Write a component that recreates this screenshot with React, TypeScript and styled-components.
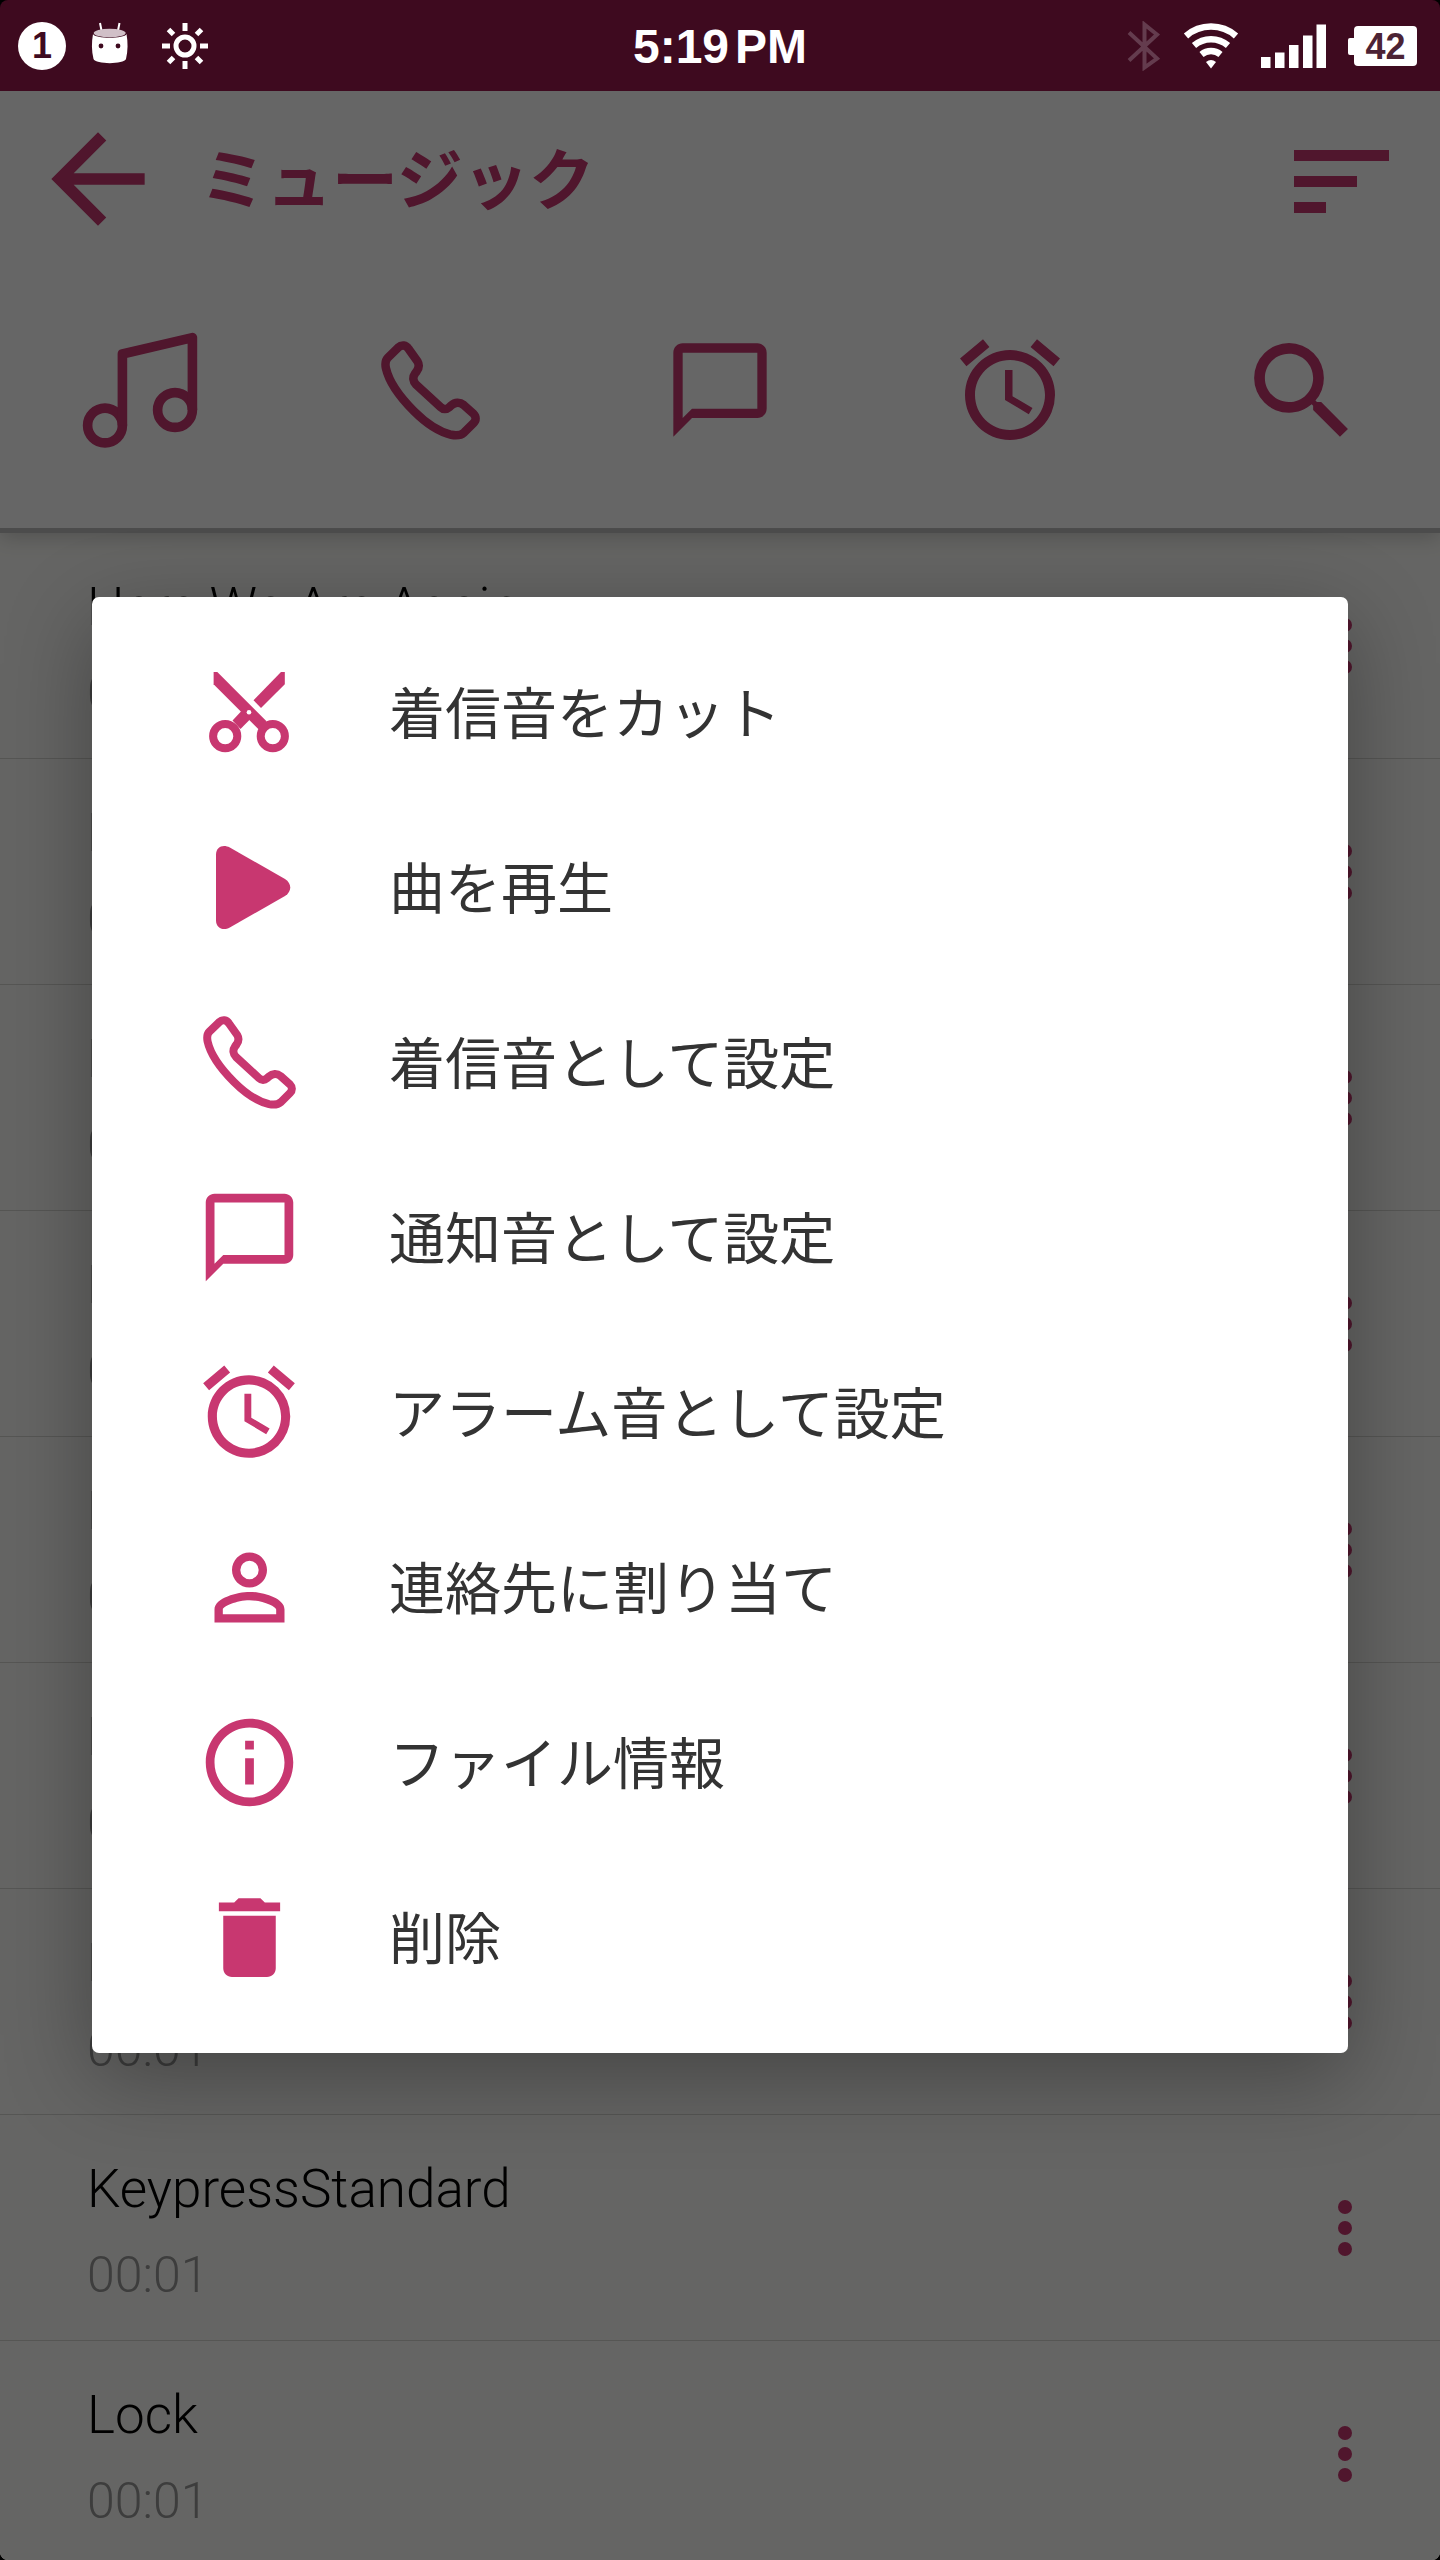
import React, { useState } from 'react'
import styled, { createGlobalStyle } from 'styled-components';


const pink = '#c83770';

const GlobalStyle = createGlobalStyle`
  * {
    box-sizing: border-box;
  }
  body {
    margin: 0;
    background-color: black;
    font-family: Roboto, "Noto Sans CJK JP", sans-serif;
  }
  button {
    border: 0;
    padding: 0;
    background: none;
    color: inherit;
    font: inherit;
    cursor: pointer;
  }
  svg {
    display: block;
    flex-shrink: 0;
  }
`;

const Phone = styled.div`
  display: flex;
  flex-direction: column;
  height: 100vh;
  border-radius: 8px;
  overflow: hidden;
`;

/* status bar */

const StatusBar = styled.div`
  display: grid;
  grid-template-columns: 1fr auto 1fr;
  align-items: center;
  flex-shrink: 0;
  height: 91px;
  padding: 0 18px;
  background-color: #3e0a1f;
  color: white;
  font-family: "Liberation Sans", sans-serif;
  font-weight: 700;
`;

const StatusGroup = styled.div<{ $end?: boolean }>`
  display: flex;
  align-items: center;
  justify-content: ${(p) => (p.$end ? 'flex-end' : 'flex-start')};
  gap: ${(p) => (p.$end ? '22px' : '24px')};
  padding-right: ${(p) => (p.$end ? '5px' : '0')};
`;

const Counter = styled.span`
  width: 48px;
  height: 48px;
  border-radius: 50%;
  background-color: white;
  color: #3e0a1f;
  font-size: 36px;
  line-height: 48px;
  text-align: center;
`;

const Clock = styled.div`
  display: flex;
  gap: 6px;
  padding-top: 2px;
  font-size: 48px;
  line-height: 56px;
`;

const Battery = styled.span`
  position: relative;
  width: 63px;
  height: 40px;
  margin-left: 6px;
  border-radius: 4px;
  background-color: white;
  color: #4c2335;
  font-size: 36px;
  line-height: 41px;
  text-align: center;
  &::before {
    content: "";
    position: absolute;
    top: 12px;
    left: -6px;
    width: 7px;
    height: 17px;
    border-radius: 2px 0 0 2px;
    background-color: white;
  }
`;

/* screen */

const Screen = styled.div`
  position: relative;
  flex: 1;
  min-height: 0;
  overflow: hidden;
  background-color: #fdfdf9;
`;

const Header = styled.header`
  position: relative;
  padding-bottom: 15px;
  border-bottom: 5px solid #bebebe;
  background-color: white;
  color: ${pink};
  box-shadow: 0 4px 20px rgba(0, 0, 0, 0.2);
`;

const TitleBar = styled.div`
  display: flex;
  align-items: center;
  height: 176px;
  padding: 0 50px 0 28px;
`;

const Title = styled.h1`
  flex: 1;
  margin: 0;
  padding: 0 32px 8px;
  font-family: "Noto Sans CJK JP", sans-serif;
  font-size: 66px;
  font-weight: 700;
  line-height: 96px;
`;

const Tabs = styled.nav`
  display: flex;
  align-items: center;
  justify-content: space-between;
  height: 246px;
  padding: 0 80px;
`;

const Tab = styled.button`
  display: flex;
  align-items: center;
  justify-content: center;
  width: 120px;
  height: 120px;
`;

const List = styled.ul`
  margin: 0;
  padding: 0;
  list-style: none;
`;

const Row = styled.li`
  display: flex;
  align-items: center;
  padding: 0 65px 0 87px;
  border-bottom: 1px solid #d7d7d3;
`;

const Song = styled.div`
  flex: 1;
  padding: 44px 0 37px;
  font-weight: 300;
`;

const SongName = styled.div`
  margin-bottom: 28px;
  color: black;
  font-size: 53px;
  line-height: 60px;
`;

const SongTime = styled.div`
  color: #999;
  font-size: 50px;
  line-height: 56px;
`;

const MoreButton = styled.button`
  display: flex;
  justify-content: center;
  width: 60px;
  color: ${pink};
`;

/* dialog */

const Scrim = styled.div`
  position: absolute;
  inset: 0;
  display: flex;
  align-items: center;
  padding: 0 92px 2px;
  background-color: rgba(0, 0, 0, 0.6);
`;

const Dialog = styled.div`
  flex: 1;
  padding: 28px 0;
  border-radius: 7px;
  background-color: white;
  box-shadow: 0 24px 88px rgba(0, 0, 0, 0.32);
`;

const MenuItem = styled.button`
  display: flex;
  align-items: center;
  gap: 84px;
  width: 100%;
  height: 175px;
  padding: 0 101px;
  color: #333;
  font-family: "Noto Sans CJK JP", sans-serif;
  font-size: 56px;
  line-height: 80px;
`;

const MenuIcon = styled.span`
  display: flex;
  align-items: center;
  justify-content: center;
  width: 112px;
  color: ${pink};
`;

const MenuText = styled.span`
  padding-bottom: 4px;
`;

//iconos de 24x24
const paths = {
  back: "M20 11H7.83l5.59-5.59L12 4l-8 8 8 8 1.41-1.41L7.83 13H20v-2z",
  message: "M20 2H4c-1.1 0-2 .9-2 2v18l4-4h14c1.1 0 2-.9 2-2V4c0-1.1-.9-2-2-2zm0 14H6l-2 2V4h16v12z",
  alarm: "M22 5.72l-4.6-3.86-1.29 1.53 4.6 3.86L22 5.72zM7.88 3.39L6.6 1.86 2 5.71l1.29 1.53 4.59-3.85zM12.5 8H11v6l4.75 2.85.75-1.23-4-2.37V8zM12 4c-4.97 0-9 4.03-9 9s4.02 9 9 9a9 9 0 0 0 0-18zm0 16c-3.87 0-7-3.13-7-7s3.13-7 7-7 7 3.13 7 7-3.13 7-7 7z",
  person: "M12 5.9a2.1 2.1 0 1 1 0 4.2 2.1 2.1 0 0 1 0-4.2m0 9c2.97 0 6.1 1.46 6.1 2.1v1.1H5.9V17c0-.64 3.13-2.1 6.1-2.1M12 4C9.79 4 8 5.79 8 8s1.79 4 4 4 4-1.79 4-4-1.79-4-4-4zm0 9c-2.67 0-8 1.34-8 4v3h16v-3c0-2.66-5.33-4-8-4z",
  info: "M11 7h2v2h-2V7zm0 4h2v6h-2v-6zm1-9C6.48 2 2 6.48 2 12s4.48 10 10 10 10-4.48 10-10S17.52 2 12 2zm0 18c-4.41 0-8-3.59-8-8s3.59-8 8-8 8 3.59 8 8-3.59 8-8 8z",
  trash: "M6 19c0 1.1.9 2 2 2h8c1.1 0 2-.9 2-2V7H6v12zM19 4h-3.5l-1-1h-5l-1 1H5v2h14V4z",
}

const Icon = ({ name, size }: { name: keyof typeof paths, size: number }) => (
  <svg width={size} height={size} viewBox="0 0 24 24" fill="currentColor"><path d={paths[name]} /></svg>
)

const SearchIcon = () => (
  <svg width="96" height="94" viewBox="2.6 3 17.9 17.5" fill="currentColor">
    <path d="M15.5 14h-.79l-.28-.27A6.471 6.471 0 0 0 16 9.5 6.5 6.5 0 1 0 9.5 16c1.61 0 3.09-.59 4.23-1.57l.27.28v.79l5 4.99L20.49 19l-4.99-5zm-6 0C7.01 14 5 11.99 5 9.5S7.01 5 9.5 5 14 7.01 14 9.5 11.99 14 9.5 14z" />
  </svg>
)

const MusicIcon = () => (
  <svg width="120" height="120" viewBox="0 0 120 120" fill="none" stroke="currentColor" strokeWidth="9.6" strokeLinejoin="round">
    <circle cx="25" cy="95.5" r="17.4" />
    <circle cx="95" cy="80" r="17.4" />
    <path d="M42.4 95.5V24L112.4 7.6V80" />
  </svg>
)

const PhoneIcon = ({ size }: { size: number }) => (
  <svg width={size} height={size} viewBox="0 0 93 92" fill="none" stroke="currentColor" strokeWidth="8" strokeLinejoin="round">
    <path d="M16 5.8L6.4 15.2C4 17.6 3.8 21 4.6 25C7.5 38 18 52.5 31 65.5C43 77.5 55 85 66 87.6C71 88.6 75 88.2 78 85.5L87 76.5C89.5 74 89.5 70.5 87 68L77.5 59.5C74 56.6 69.5 56.8 66 60L64 61.8C61.5 64 58.5 64 56 61.6L33 40.5C30 37.5 29.5 33.5 32 30L33.5 28C36 24.5 36 21.5 34.2 18.5L26 7C23.5 3.2 19.5 2.6 16 5.8Z" />
  </svg>
)

const ScissorsIcon = () => (
  <svg width="80" height="81" viewBox="0 0 80 81" fill="currentColor">
    <path d="M4.6 0H8.3L57.5 49.2L49.5 57.2L4.6 12.3Z" />
    <path d="M72 0H75.8V12.2L52 36L44.5 28.3Z" />
    <path d="M32 39.5L23.5 48.5L31.5 57L40.4 48L41 40Z" />
    <circle cx="16.2" cy="64.2" r="12.1" fill="none" stroke="currentColor" strokeWidth="8" />
    <circle cx="63.8" cy="64.2" r="12.1" fill="none" stroke="currentColor" strokeWidth="8" />
    <circle cx="40" cy="40.2" r="2.3" fill="white" />
  </svg>
)

const PlayIcon = () => (
  <svg width="105" height="105" viewBox="-19 -11 105 105" fill="currentColor">
    <path d="M0 8.5C0 1 7-2.2 13.8 1.5L69 33C76 37.5 76 45.5 69 50L13.8 81.5C7 85.2 0 82 0 74.5Z" />
  </svg>
)

const SortIcon = () => (
  <svg width="96" height="70" viewBox="0 0 96 70" fill="currentColor">
    <path d="M0 6h95v11H0zM0 32h63v11H0zM0 58h32v11H0z" />
  </svg>
)

const DotsIcon = () => (
  <svg width="14" height="56" viewBox="0 0 14 56" fill="currentColor">
    <circle cx="7" cy="7" r="7" />
    <circle cx="7" cy="28" r="7" />
    <circle cx="7" cy="49" r="7" />
  </svg>
)

const RobotIcon = () => (
  <svg width="48" height="48" viewBox="0 0 48 48" fill="white">
    <path d="M10 1L12 11M29.5 1L27.5 11" stroke="white" strokeWidth="2" />
    <path d="M3 12C5 17 34.5 17 36.5 12C38 20 38 29 36 37C34 42.5 5.5 42.5 3.5 37C1.5 29 1.5 20 3 12Z" />
    <ellipse cx="19.7" cy="11" rx="16" ry="4.3" fill="#d0bfc7" />
    <circle cx="11" cy="24" r="2.4" fill="#3e0a1f" />
    <circle cx="28" cy="24" r="2.4" fill="#3e0a1f" />
  </svg>
)

const SunIcon = () => (
  <svg width="48" height="48" viewBox="0 0 48 48" fill="none" stroke="white" strokeWidth="5">
    <circle cx="23" cy="24" r="9" />
    <path d="M23 1v8M23 39v8M0 24h8M38 24h8M6.5 7.5l5 5M34.5 35.5l5 5M39.5 7.5l-5 5M11.5 35.5l-5 5" />
  </svg>
)

const BluetoothIcon = () => (
  <svg width="34" height="50" viewBox="0 0 34 50" fill="none" stroke="#643c4e" strokeWidth="4">
    <path d="M2 11.5L30 37.5L17.5 46.5V3.5L30 13.5L2 39.5" />
  </svg>
)

const WifiIcon = () => (
  <svg width="56" height="46" viewBox="0 0 56 46" fill="none" stroke="white" strokeWidth="6.5">
    <path d="M3 13A38 38 0 0 1 53 13M11 22.5A26 26 0 0 1 45 22.5M18.5 31.5A15 15 0 0 1 37.5 31.5" />
    <path d="M23 39Q28 35 33 39L28 45.5Z" fill="white" stroke="none" />
  </svg>
)

const SignalIcon = () => (
  <svg width="65" height="44" viewBox="0 0 65 44" fill="white">
    <path d="M0 33h9.5v11H0zM14 28.5h9.5v15.5H14zM28 21h9.5v23H28zM42 11.5h9.5v32.5H42zM55.5 0.5h9.5v43.5H55.5z" />
  </svg>
)

const songs = [
  { name: "Here We Are Again", time: "03:12" },
  { name: "Dock", time: "00:01" },
  { name: "Effect", time: "00:01" },
  { name: "Focus", time: "00:01" },
  { name: "Hello", time: "00:01" },
  { name: "Home", time: "00:01" },
  { name: "Key", time: "00:01" },
  { name: "KeypressStandard", time: "00:01" },
  { name: "Lock", time: "00:01" },
]

const menu = [
  { text: "着信音をカット", icon: <ScissorsIcon /> },
  { text: "曲を再生", icon: <PlayIcon /> },
  { text: "着信音として設定", icon: <PhoneIcon size={93} /> },
  { text: "通知音として設定", icon: <Icon name="message" size={105} /> },
  { text: "アラーム音として設定", icon: <Icon name="alarm" size={110} /> },
  { text: "連絡先に割り当て", icon: <Icon name="person" size={105} /> },
  { text: "ファイル情報", icon: <Icon name="info" size={105} /> },
  { text: "削除", icon: <Icon name="trash" size={105} /> },
]

export default function App() {

  //el menu de la cancion empieza abierto
  const [open, setOpen] = useState(true);

  return (
    <>
      <GlobalStyle />
      <Phone>

        <StatusBar>
          <StatusGroup>
            <Counter>1</Counter>
            <RobotIcon />
            <SunIcon />
          </StatusGroup>
          <Clock><span>5:19</span><span>PM</span></Clock>
          <StatusGroup $end>
            <BluetoothIcon />
            <WifiIcon />
            <SignalIcon />
            <Battery>42</Battery>
          </StatusGroup>
        </StatusBar>

        <Screen>
          <Header>
            <TitleBar>
              <button><Icon name="back" size={140} /></button>
              <Title>ミュージック</Title>
              <button><SortIcon /></button>
            </TitleBar>
            <Tabs>
              <Tab><MusicIcon /></Tab>
              <Tab><PhoneIcon size={99} /></Tab>
              <Tab><Icon name="message" size={112} /></Tab>
              <Tab><Icon name="alarm" size={120} /></Tab>
              <Tab><SearchIcon /></Tab>
            </Tabs>
          </Header>

          <List>
            {songs.map((song) => (
              <Row key={song.name}>
                <Song>
                  <SongName>{song.name}</SongName>
                  <SongTime>{song.time}</SongTime>
                </Song>
                <MoreButton onClick={() => setOpen(true)}><DotsIcon /></MoreButton>
              </Row>
            ))}
          </List>

          {open && (
            <Scrim onClick={() => setOpen(false)}>
              <Dialog role="dialog">
                {menu.map((item) => (
                  <MenuItem key={item.text}>
                    <MenuIcon>{item.icon}</MenuIcon>
                    <MenuText>{item.text}</MenuText>
                  </MenuItem>
                ))}
              </Dialog>
            </Scrim>
          )}
        </Screen>

      </Phone>
    </>
  )

}
